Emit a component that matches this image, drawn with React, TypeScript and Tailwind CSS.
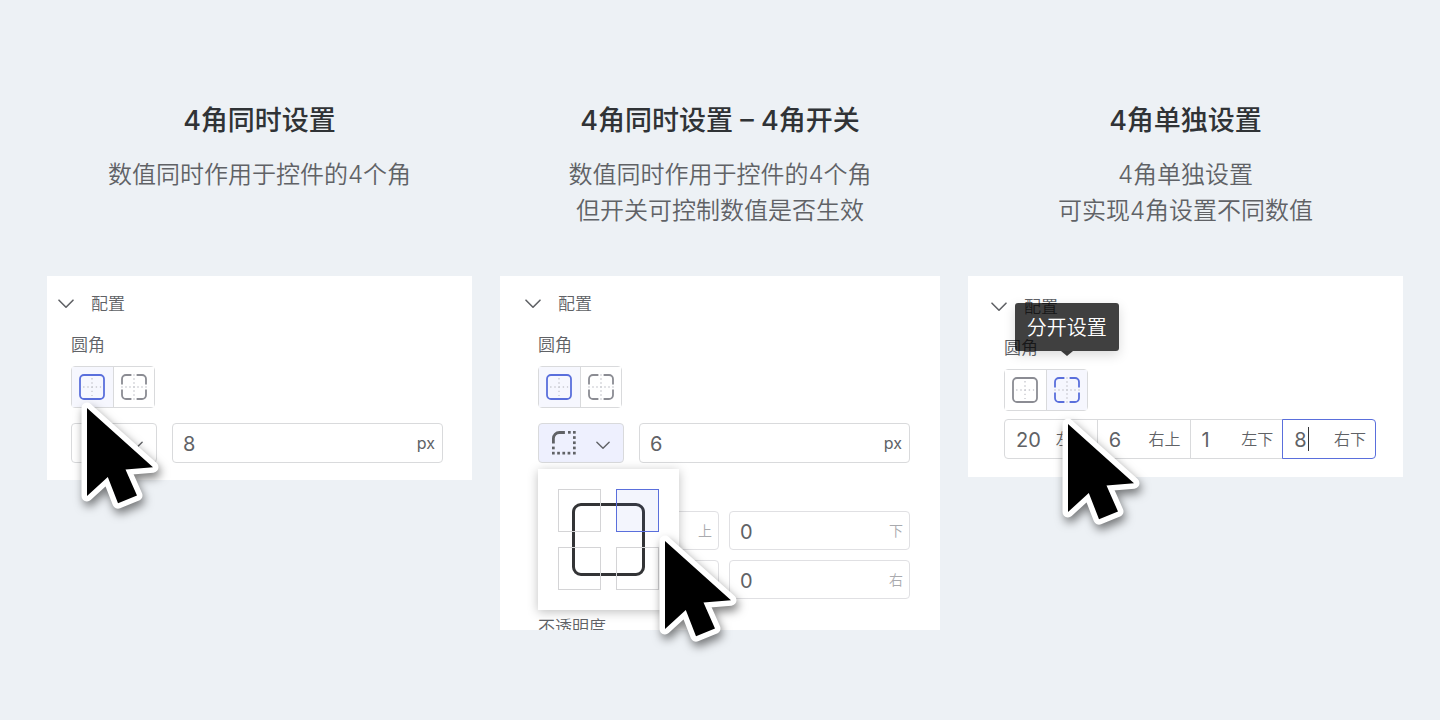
import React from "react";

const columns = [
  {
    title: "4角同时设置",
    desc: ["数值同时作用于控件的4个角"],
    panel: <UniformPanel />,
  },
  {
    title: "4角同时设置 – 4角开关",
    desc: ["数值同时作用于控件的4个角", "但开关可控制数值是否生效"],
    panel: <SwitchPanel />,
  },
  {
    title: "4角单独设置",
    desc: ["4角单独设置", "可实现4角设置不同数值"],
    panel: <SeparatePanel />,
  },
];

const corners = [
  { name: "左上", value: "20" },
  { name: "右上", value: "6" },
  { name: "左下", value: "1" },
  { name: "右下", value: "8" },
];

function Chevron({ className }: { className?: string }) {
  return (
    <svg
      viewBox="0 0 16 10"
      fill="none"
      stroke="currentColor"
      strokeWidth="1.6"
      strokeLinecap="round"
      strokeLinejoin="round"
      className={className}
    >
      <path d="M1 1.2l7 7 7-7" />
    </svg>
  );
}

function LinkedIcon() {
  return (
    <svg viewBox="0 0 26 26" fill="none" className="size-[26px]">
      <g stroke="#c9cad0" strokeWidth="1.4">
        <path d="M4.1 13h18" strokeDasharray="1.4 2.8" />
        <path d="M13 4.1v18" strokeDasharray="1.4 2.8" />
      </g>
      <rect x="1" y="1" width="24" height="24" rx="4" stroke="currentColor" strokeWidth="1.8" />
    </svg>
  );
}

function SplitIcon() {
  return (
    <svg viewBox="0 0 26 26" fill="none" className="size-[26px]">
      <g stroke="#c9cad0" strokeWidth="1.4">
        <path d="M.3 13h26" strokeDasharray="1.4 2.6" />
        <path d="M13 .3v26" strokeDasharray="1.4 2.6" />
      </g>
      <g stroke="currentColor" strokeWidth="1.8">
        <path d="M1 10.4V5a4 4 0 0 1 4-4h5.4" />
        <path d="M15.6 1H21a4 4 0 0 1 4 4v5.4" />
        <path d="M25 15.6V21a4 4 0 0 1-4 4h-5.4" />
        <path d="M10.4 25H5a4 4 0 0 1-4-4v-5.4" />
      </g>
    </svg>
  );
}

function CornerIcon() {
  const dots = [
    [16, 0], [21, 0],
    [21, 5.2], [21, 10.4], [21, 15.6], [21, 20.8],
    [0, 15.6], [0, 20.8], [5.2, 20.8], [10.4, 20.8], [15.6, 20.8],
  ];
  return (
    <svg viewBox="0 0 24 24" className="size-6">
      <path d="M1.4 12.6V7.5a6 6 0 0 1 6-6h5.5" fill="none" stroke="#606266" strokeWidth="2.8" />
      {dots.map(([x, y]) => (
        <rect key={`${x}-${y}`} x={x} y={y} width="2.7" height="2.7" fill="#606266" />
      ))}
    </svg>
  );
}

function Cursor({ className }: { className: string }) {
  const d = "M12 12L78 71.2L50.5 73.5L62 99.5L43 107.2L32.8 81L12 100Z";
  return (
    <svg
      viewBox="0 0 100 124"
      className={
        "pointer-events-none absolute z-20 h-[124px] w-[100px] overflow-visible drop-shadow-[2px_5px_5px_rgba(0,0,0,0.5)] " +
        className
      }
    >
      <path d={d} fill="#fff" stroke="#fff" strokeWidth="11" strokeLinejoin="round" />
      <path d={d} fill="#000" />
    </svg>
  );
}

function PanelHeader() {
  return (
    <button className="-ml-[13px] flex h-6 items-center gap-[17px] text-[17px] leading-6">
      <Chevron className="h-[10px] w-4" />
      配置
    </button>
  );
}

function ModeToggle({ split = false, tip }: { split?: boolean; tip?: string }) {
  const on = "bg-[#f6f7fe] text-[#5a6fdc]";
  const off = "bg-white text-[#8b8c93]";
  return (
    <div className="flex h-[42px] w-[84px] rounded-sm border border-[#d9dadc]">
      <button
        aria-label="统一设置"
        aria-pressed={!split}
        className={"flex flex-1 items-center justify-center border-r border-[#d9dadc] " + (split ? off : on)}
      >
        <LinkedIcon />
      </button>
      <button
        aria-label="分开设置"
        aria-pressed={split}
        className={"relative flex flex-1 items-center justify-center " + (split ? on : off)}
      >
        <SplitIcon />
        {tip && (
          <span
            role="tooltip"
            className="absolute bottom-full left-1/2 z-10 mb-[19px] -translate-x-1/2 rounded-[3px] bg-black/75 px-3 pt-[9px] pb-[7px] text-xl leading-8 whitespace-nowrap text-white shadow-[0_4px_12px_rgba(0,0,0,0.15)]"
          >
            {tip}
            <span className="absolute top-full left-1/2 -translate-x-1/2 border-x-[6px] border-t-[5px] border-x-transparent border-t-black/75" />
          </span>
        )}
      </button>
    </div>
  );
}

function CornerSelect({ open = false }: { open?: boolean }) {
  return (
    <button
      aria-label="选择圆角"
      aria-expanded={open}
      className={
        "flex h-10 w-[86px] shrink-0 items-center justify-between rounded-sm border border-[#d9dadc] px-[13px] " +
        (open ? "bg-[#eef0fe]" : "bg-white")
      }
    >
      <CornerIcon />
      <Chevron className="mt-1 h-[9px] w-[14px]" />
    </button>
  );
}

function NumberField({ label, value, unit }: { label: string; value: string; unit: string }) {
  return (
    <label className="flex h-10 min-w-0 flex-1 items-center rounded-sm border border-[#d9dadc] bg-white pr-[7px] pl-[10px] font-normal">
      <input aria-label={label} defaultValue={value} className="w-full min-w-0 bg-transparent pt-px text-xl outline-none" />
      <span className="text-base">{unit}</span>
    </label>
  );
}

function MarginField({ side, value }: { side: string; value: string }) {
  return (
    <label className="flex h-[39px] min-w-0 items-center rounded-sm border border-[#e0e0e3] bg-white pr-1.5 pl-[10px]">
      <input defaultValue={value} className="w-full min-w-0 bg-transparent pt-0.5 text-xl font-normal outline-none" />
      <span className="text-sm text-[#a9aaae]">{side}</span>
    </label>
  );
}

function CornerPicker() {
  return (
    <div className="absolute top-full left-0 z-10 mt-1.5 bg-white p-5 shadow-[0_2px_10px_rgba(0,0,0,0.25)]">
      <div className="absolute inset-[34px] rounded-[9px] border-3 border-[#333436]" />
      <div className="relative grid grid-cols-[43px_43px] gap-[15px]">
        {corners.map((c) => (
          <button
            key={c.name}
            aria-label={c.name}
            aria-pressed={c.name === "右上"}
            className={
              "h-[43px] border " +
              (c.name === "右上" ? "border-[#5a6fdc] bg-[#5a6fdc]/7" : "border-[#d4d4d6]")
            }
          />
        ))}
      </div>
    </div>
  );
}

function UniformPanel() {
  return (
    <div className="relative bg-white pt-4 pr-[29px] pb-[17px] pl-6">
      <PanelHeader />
      <div className="mt-[17px] text-[17px] leading-6">圆角</div>
      <div className="mt-[9px] mb-[15px]">
        <ModeToggle />
      </div>
      <div className="flex gap-[15px]">
        <CornerSelect />
        <NumberField label="圆角" value="8" unit="px" />
      </div>
      <Cursor className="top-[120px] left-7" />
    </div>
  );
}

function SwitchPanel() {
  return (
    <div className="relative bg-white pt-4 pr-[30px] pl-[38px]">
      <PanelHeader />
      <div className="mt-[17px] text-[17px] leading-6">圆角</div>
      <div className="mt-[9px] mb-[15px]">
        <ModeToggle />
      </div>
      <div className="relative flex gap-[15px]">
        <CornerSelect open />
        <NumberField label="圆角" value="6" unit="px" />
        <CornerPicker />
      </div>
      <div className="mt-12 grid grid-cols-2 gap-[10px]">
        <MarginField side="上" value="0" />
        <MarginField side="下" value="0" />
        <MarginField side="左" value="0" />
        <MarginField side="右" value="0" />
      </div>
      <div className="mt-4 h-[15px] overflow-hidden text-[17px] leading-6">不透明度</div>
      <Cursor className="top-[253px] left-[153px]" />
    </div>
  );
}

function SeparatePanel() {
  return (
    <div className="relative bg-white pt-[19px] pr-[27px] pb-[18px] pl-9">
      <PanelHeader />
      <div className="mt-[17px] text-[17px] leading-6">圆角</div>
      <div className="mt-[9px] mb-2">
        <ModeToggle split tip="分开设置" />
      </div>
      <div className="flex">
        {corners.map((c, i) => (
          <label
            key={c.name}
            className={
              "relative flex h-10 min-w-0 flex-1 items-center border pr-[9px] pl-[11px] " +
              (i === 0 ? "rounded-l-sm " : "-ml-px ") +
              (i === 3 ? "z-10 rounded-r-sm border-[#5a6fdc]" : "border-[#d9dadc]")
            }
          >
            <input
              defaultValue={c.value}
              className="w-full min-w-0 bg-transparent pt-px text-xl font-normal outline-none"
            />
            {i === 3 && <span className="absolute left-[25px] h-6 w-px bg-[#333436]" />}
            <span className="shrink-0 text-base">{c.name}</span>
          </label>
        ))}
      </div>
      <Cursor className="top-[136px] left-[88px]" />
    </div>
  );
}

const App: React.FC = () => {
  return (
    <main className="min-h-screen bg-[#edf1f5] pt-[103px] pr-[37px] pb-12 pl-[47px] font-['Inter','Noto_Sans_CJK_SC',sans-serif] font-[350] text-[#606266]">
      <div className="grid grid-cols-[425fr_440fr_435fr] grid-rows-[auto_auto] gap-x-7 gap-y-[47px]">
        {columns.map((col) => (
          <section key={col.title} className="row-span-2 grid grid-rows-subgrid items-start">
            <header className="text-center">
              <h2 className="text-[27px] leading-9 font-medium text-[#303336]">{col.title}</h2>
              <p className="mt-[18px] text-2xl leading-9">
                {col.desc.map((line) => (
                  <span key={line} className="block">
                    {line}
                  </span>
                ))}
              </p>
            </header>
            {col.panel}
          </section>
        ))}
      </div>
    </main>
  );
};

export default App;
